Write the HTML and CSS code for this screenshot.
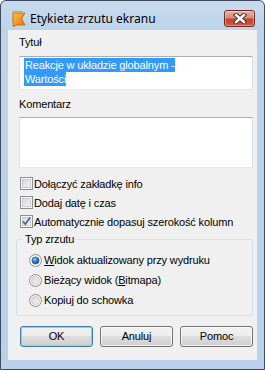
FILE: index.html
```html
<!DOCTYPE html>
<html lang="pl">
<head>
    <meta charset="UTF-8">
    <title>Etykieta zrzutu ekranu</title>
    <link rel="stylesheet" href="styles.css">
</head>
<body>
    <svg class="defs" width="0" height="0">
        <defs>
            <radialGradient id="dot" cx="40%" cy="35%" r="70%">
                <stop offset="0" stop-color="#9fd3ff"/>
                <stop offset="0.45" stop-color="#2d7fd6"/>
                <stop offset="1" stop-color="#0b3f8c"/>
            </radialGradient>
            <linearGradient id="flag" x1="0" y1="0" x2="1" y2="1">
                <stop offset="0" stop-color="#ffc14d"/>
                <stop offset="1" stop-color="#e07200"/>
            </linearGradient>
            <linearGradient id="box" x1="0" y1="0" x2="1" y2="1">
                <stop offset="0" stop-color="#d6d6d6"/>
                <stop offset="1" stop-color="#f6f6f6"/>
            </linearGradient>
        </defs>
    </svg>

    <div class="window">
        <div class="titlebar">
            <svg class="app-icon" width="16" height="16" viewBox="0 0 16 16">
                <rect x="1" y="0.5" width="9" height="10" fill="#e9d3a8" stroke="#c9a66b"/>
                <path d="M1 2 L13 2 L9.5 7.5 L13 14 L5 14 L1 15.5 Z" fill="url(#flag)" stroke="#c86400" stroke-width="0.8"/>
            </svg>
            <span class="title">Etykieta zrzutu ekranu</span>
            <div class="close">
                <svg width="14" height="11" viewBox="0 0 14 11">
                    <path d="M3 2 L11 9 M11 2 L3 9" stroke="#4a3430" stroke-width="4.4" stroke-linecap="square"/>
                    <path d="M3 2 L11 9 M11 2 L3 9" stroke="#ffffff" stroke-width="2.4" stroke-linecap="square"/>
                </svg>
            </div>
        </div>

        <div class="client">
            <div class="label label-first">Tytuł</div>
            <div class="textbox title-box">
                <div class="line"><span class="sel">Reakcje w układzie globalnym - </span></div>
                <div class="line"><span class="sel">Wartości</span></div>
            </div>

            <div class="label label-comment">Komentarz</div>
            <div class="textbox comment-box"></div>

            <div class="checks">
                <div class="check-row">
                    <svg class="check" width="13" height="13" viewBox="0 0 13 13">
                        <rect x="0.5" y="0.5" width="12" height="12" fill="#f6f6f6" stroke="#8e8f8f"/>
                        <rect x="2.5" y="2.5" width="8" height="8" fill="url(#box)" stroke="#c9ccd0"/>
                    </svg>
                    <span>Dołączyć zakładkę info</span>
                </div>
                <div class="check-row">
                    <svg class="check" width="13" height="13" viewBox="0 0 13 13">
                        <rect x="0.5" y="0.5" width="12" height="12" fill="#f6f6f6" stroke="#8e8f8f"/>
                        <rect x="2.5" y="2.5" width="8" height="8" fill="url(#box)" stroke="#c9ccd0"/>
                    </svg>
                    <span>Dodaj datę i czas</span>
                </div>
                <div class="check-row">
                    <svg class="check" width="13" height="13" viewBox="0 0 13 13">
                        <rect x="0.5" y="0.5" width="12" height="12" fill="#f6f6f6" stroke="#8e8f8f"/>
                        <rect x="2.5" y="2.5" width="8" height="8" fill="url(#box)" stroke="#c9ccd0"/>
                        <path d="M3 6.5 L5.3 9.2 L10.2 2.6" fill="none" stroke="#4c5f92" stroke-width="1.6"/>
                    </svg>
                    <span>Automatycznie dopasuj szerokość kolumn</span>
                </div>
            </div>

            <fieldset class="group">
                <legend>Typ zrzutu</legend>
                <div class="radio-row">
                    <svg class="radio" width="13" height="13" viewBox="0 0 13 13">
                        <circle cx="6.5" cy="6.5" r="6" fill="#f6f6f6" stroke="#8e8f8f"/>
                        <circle cx="6.5" cy="6.5" r="3.6" fill="url(#dot)" stroke="#3a5f8f" stroke-width="0.6"/>
                    </svg>
                    <span><u>W</u>idok aktualizowany przy wydruku</span>
                </div>
                <div class="radio-row">
                    <svg class="radio" width="13" height="13" viewBox="0 0 13 13">
                        <circle cx="6.5" cy="6.5" r="6" fill="#f6f6f6" stroke="#8e8f8f"/>
                        <circle cx="6.5" cy="6.5" r="4" fill="url(#box)" stroke="#cbcdd0"/>
                    </svg>
                    <span>Bieżący widok (<u>B</u>itmapa)</span>
                </div>
                <div class="radio-row">
                    <svg class="radio" width="13" height="13" viewBox="0 0 13 13">
                        <circle cx="6.5" cy="6.5" r="6" fill="#f6f6f6" stroke="#8e8f8f"/>
                        <circle cx="6.5" cy="6.5" r="4" fill="url(#box)" stroke="#cbcdd0"/>
                    </svg>
                    <span>Kopiuj do schowka</span>
                </div>
            </fieldset>

            <div class="buttons">
                <div class="btn btn-default">OK</div>
                <div class="btn">Anuluj</div>
                <div class="btn">Pomoc</div>
            </div>
        </div>
    </div>
</body>
</html>
```

FILE: styles.css
```css
body {
    margin: 0;
    font-family: 'Liberation Sans', Arial, sans-serif;
    font-size: 11px;
    letter-spacing: -0.15px;
    color: #000;
    background: #ffffff;
}

.defs {
    position: absolute;
}

.window {
    width: 265px;
    height: 370px;
    box-sizing: border-box;
    border: 1px solid #3d4c5e;
    border-radius: 6px 6px 0 0;
    background: linear-gradient(#c9dbee 0px, #bcd3eb 29px, #b9d1ea 100%);
}

.titlebar {
    height: 29px;
    box-sizing: border-box;
    padding: 9px 9px 0 11px;
    display: flex;
    align-items: flex-start;
}

.app-icon {
    margin-top: 1px;
    margin-right: 2px;
}

.title {
    flex: 1;
    font-family: 'Noto Sans', 'Liberation Sans', sans-serif;
    font-size: 12px;
    letter-spacing: 0;
    line-height: 16px;
    margin-top: 1px;
    color: #000;
}

.close {
    width: 31px;
    height: 17px;
    box-sizing: border-box;
    border: 1px solid #6f2b22;
    border-radius: 3px;
    background: linear-gradient(#e8b2a7 0%, #d8897a 45%, #c2452f 55%, #cf5a40 100%);
    box-shadow: inset 0 0 0 1px rgba(255, 255, 255, 0.35);
    display: flex;
    align-items: center;
    justify-content: center;
}

.client {
    margin: 0 7px;
    height: 330px;
    box-sizing: border-box;
    background: #f0f0f0;
    padding: 6px 4px 0 11px;
}

.label {
    line-height: 13px;
    height: 13px;
}

.label-comment {
    margin-top: 8px;
}

.textbox {
    background: #ffffff;
    border: 1px solid;
    border-color: #abadb3 #dbdfe6 #e3e9ef #e2e3ea;
    box-sizing: border-box;
}

.title-box {
    margin-top: 7px;
    height: 34px;
    padding: 1px 0 0 4px;
}

.line {
    height: 14px;
}

.sel {
    display: inline-block;
    background: #3399ff;
    color: #ffffff;
    line-height: 14px;
    padding-left: 1px;
}

.comment-box {
    margin-top: 6px;
    height: 51px;
}

.checks {
    margin-top: 6px;
}

.check-row {
    height: 19px;
    display: flex;
    align-items: center;
    margin-left: 1px;
}

.check {
    margin-right: 1px;
    flex: none;
}

.group {
    margin: 2px 0 0 -3px;
    padding: 4px 0 5px 6px;
    border: 1px solid #d5dfe5;
    border-radius: 3px;
    min-width: 0;
}

.group legend {
    padding: 0 2px;
    line-height: 13px;
}

.radio-row {
    height: 20px;
    display: flex;
    align-items: center;
    margin-left: 6px;
}

.radio {
    margin-right: 2px;
    flex: none;
}

.radio-row u {
    text-underline-offset: 1px;
}

.buttons {
    margin: 10px 0 0 1px;
    display: flex;
    gap: 7px;
}

.btn {
    width: 73px;
    height: 21px;
    box-sizing: border-box;
    border: 1px solid #707070;
    border-radius: 3px;
    background: linear-gradient(#f2f2f2 0%, #ebebeb 50%, #dddddd 50%, #cfcfcf 100%);
    box-shadow: inset 0 0 0 1px rgba(255, 255, 255, 0.75);
    text-align: center;
    line-height: 19px;
}

.btn-default {
    border-color: #3c7fb1;
    box-shadow: inset 0 0 0 1px #7fd4f5;
}
```
